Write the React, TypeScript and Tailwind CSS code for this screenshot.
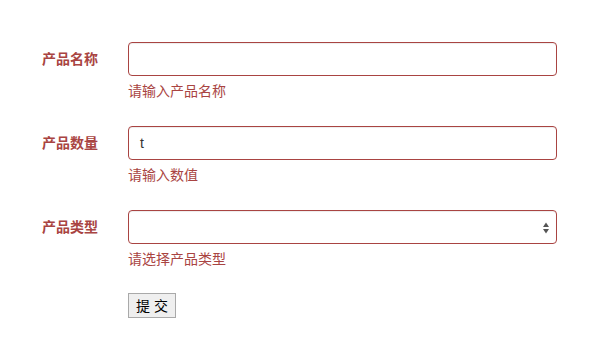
import React from "react";

const font = { fontFamily: '"Helvetica Neue", "Liberation Sans", "Noto Sans CJK SC", sans-serif' };

function Row({ label, help, children }: { label: string; help: string; children: React.ReactNode }) {
  return (
    <div className="flex mb-[15px]">
      <label className="w-[86px] shrink-0 pt-[7px] text-sm leading-5 font-bold text-[#a94442]">{label}</label>
      <div className="flex-1">
        {children}
        <div className="mt-[5px] mb-[10px] text-sm leading-5 text-[#a94442]">{help}</div>
      </div>
    </div>
  );
}

export default function App() {
  return (
    <div className="w-[600px] h-[342px] bg-white pt-[42px] pl-[42px] pr-[43px]" style={font}>
      <Row label="产品名称" help="请输入产品名称">
        <div className="h-[34px] border border-[#a94442] rounded-[4px] shadow-[inset_0_1px_1px_rgba(0,0,0,0.075)]"></div>
      </Row>
      <Row label="产品数量" help="请输入数值">
        <div className="h-[34px] border border-[#a94442] rounded-[4px] pl-[11px] pr-3 flex items-center text-sm text-[#333] shadow-[inset_0_1px_1px_rgba(0,0,0,0.075)]">
          t
        </div>
      </Row>
      <Row label="产品类型" help="请选择产品类型">
        <div className="h-[34px] border border-[#a94442] rounded-[4px] flex items-center justify-end pr-[7px] pt-[2px] shadow-[inset_0_1px_1px_rgba(0,0,0,0.075)]">
          <svg width="6" height="12" viewBox="0 0 6 12">
            <path d="M3 0.5 L6 5 L0 5 Z" fill="#555" />
            <path d="M3 11.5 L6 7 L0 7 Z" fill="#555" />
          </svg>
        </div>
      </Row>
      <div className="pl-[86px] -mt-[1px]">
        <button className="h-[25px] w-[48px] border border-[#a9a9a9] bg-[#efefef] text-sm text-black flex items-center justify-center">
          提 交
        </button>
      </div>
    </div>
  );
}
